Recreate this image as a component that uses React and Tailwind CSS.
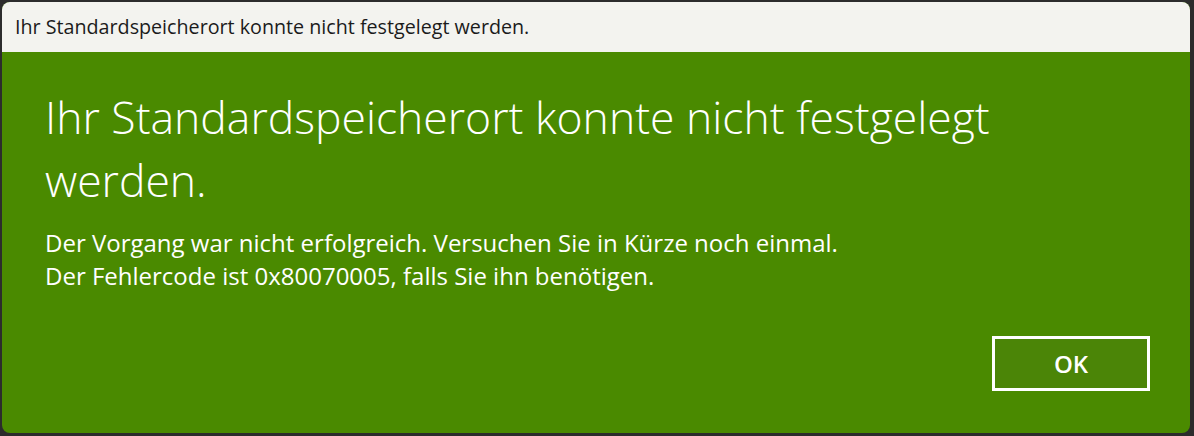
export default function App() {
  return (
    <div className="w-[1194px] h-[436px] bg-[#2c2c2c] pt-[2px] pl-[2px] pr-[4px] pb-[3px]" style={{ fontFamily: '"Open Sans", "Noto Sans", sans-serif' }}>
      <div className="flex h-full flex-col overflow-hidden rounded-[8px] bg-[#4a8a00]">
        <div className="flex h-[50px] shrink-0 items-center bg-[#f3f3ef] pl-[13px] text-[19.7px] text-[#1b1b1b]">
          Ihr Standardspeicherort konnte nicht festgelegt werden.
        </div>
        <div className="flex flex-1 flex-col pl-[43px] pr-[40px] text-white">
          <h1 className="mt-[33px] text-[44.5px] font-light leading-[63px]">
            Ihr Standardspeicherort konnte nicht festgelegt werden.
          </h1>
          <div className="mt-[15px] text-[24px] leading-[33px]">
            <p>Der Vorgang war nicht erfolgreich. Versuchen Sie in Kürze noch einmal.</p>
            <p>Der Fehlercode ist 0x80070005, falls Sie ihn benötigen.</p>
          </div>
          <div className="mt-auto mb-[42px] flex justify-end">
            <button className="h-[55px] w-[158px] border-[3px] border-white bg-[#4b8507] text-[24px] font-semibold text-white">
              OK
            </button>
          </div>
        </div>
      </div>
    </div>
  );
}
